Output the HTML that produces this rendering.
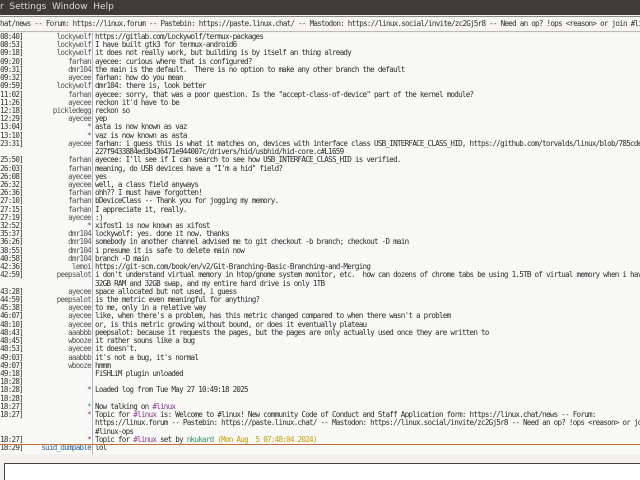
<!DOCTYPE html>
<html><head><meta charset="utf-8"><style>
*{margin:0;padding:0;box-sizing:border-box}
body{width:640px;height:480px;overflow:hidden;background:#f2f1f0;font-family:"DejaVu Sans Mono","Liberation Mono",monospace;position:relative}
#menu{position:absolute;left:0;top:0;width:640px;height:15px;background:#3c3b37;color:#dfdbd2;font:9px "DejaVu Sans","Liberation Sans",sans-serif;line-height:15px;white-space:pre}
#topic{position:absolute;left:0;top:16px;width:640px;height:16px;background:#f6f5f4;border-top:1px solid #8a8986;border-bottom:1px solid #bcbab7;font-size:7.6px;letter-spacing:-0.75px;line-height:14px;color:#333;white-space:pre;overflow:hidden}
#chat{position:absolute;left:0;top:33px;width:640px;height:421px;background:#f8f8f6;overflow:hidden}
#sep{position:absolute;left:92px;top:0;width:1px;height:421px;background:#b0b4c4}
.r{position:relative;height:8.22px;font-size:7.6px;letter-spacing:-0.75px;line-height:8.22px;white-space:pre;color:#2e2e2e}
.t{position:absolute;right:617px;top:0;color:#333}
.n{position:absolute;right:549px;top:0;color:#555}
.m{position:absolute;left:95px;top:0}
.p{color:#8b3c8b}.g{color:#3a9a6a}.y{color:#c4a000}.b{color:#3465a4}
#red{position:absolute;left:0;top:411px;width:640px;height:1px;background:#c07040}
#input{position:absolute;left:4px;top:463px;width:640px;height:17px;background:#fff;border:1px solid #444;border-right:none;border-bottom:none}
</style></head><body>
<div id="menu">r  Settings  Window  Help</div>
<div id="topic">hat/news -- Forum: https://linux.forum -- Pastebin: https://paste.linux.chat/ -- Mastodon: https://linux.social/invite/zc2Gj5r8 -- Need an op? !ops &lt;reason&gt; or join #linux-ops</div>
<div id="chat"><div id="sep"></div>
<div class="r"><span class="t">08:40]</span><span class="n">lockywolf</span><span class="m">https://gitlab.com/Lockywolf/termux-packages</span></div>
<div class="r"><span class="t">08:53]</span><span class="n">lockywolf</span><span class="m">I have built gtk3 for termux-android6</span></div>
<div class="r"><span class="t">09:18]</span><span class="n">lockywolf</span><span class="m">it does not really work, but building is by itself an thing already</span></div>
<div class="r"><span class="t">09:20]</span><span class="n">farhan</span><span class="m">ayecee: curious where that is configured?</span></div>
<div class="r"><span class="t">09:31]</span><span class="n">dmr104</span><span class="m">the main is the default.  There is no option to make any other branch the default</span></div>
<div class="r"><span class="t">09:32]</span><span class="n">ayecee</span><span class="m">farhan: how do you mean</span></div>
<div class="r"><span class="t">09:59]</span><span class="n">lockywolf</span><span class="m">dmr104: there is, look better</span></div>
<div class="r"><span class="t">11:02]</span><span class="n">farhan</span><span class="m">ayecee: sorry, that was a poor question. Is the "accept-class-of-device" part of the kernel module?</span></div>
<div class="r"><span class="t">11:26]</span><span class="n">ayecee</span><span class="m">reckon it'd have to be</span></div>
<div class="r"><span class="t">12:18]</span><span class="n">pickledegg</span><span class="m">reckon so</span></div>
<div class="r"><span class="t">12:29]</span><span class="n">ayecee</span><span class="m">yep</span></div>
<div class="r"><span class="t">13:04]</span><span class="n">*</span><span class="m">asta is now known as vaz</span></div>
<div class="r"><span class="t">13:10]</span><span class="n">*</span><span class="m">vaz is now known as asta</span></div>
<div class="r"><span class="t">23:31]</span><span class="n">ayecee</span><span class="m">farhan: i guess this is what it matches on, devices with interface class USB_INTERFACE_CLASS_HID, https://github.com/torvalds/linux/blob/785cdec</span></div>
<div class="r"><span class="m">227f9433884ed3b436471e944007c/drivers/hid/usbhid/hid-core.c#L1659</span></div>
<div class="r"><span class="t">25:50]</span><span class="n">farhan</span><span class="m">ayecee: I'll see if I can search to see how USB_INTERFACE_CLASS_HID is verified.</span></div>
<div class="r"><span class="t">26:03]</span><span class="n">farhan</span><span class="m">meaning, do USB devices have a "I'm a hid" field?</span></div>
<div class="r"><span class="t">26:08]</span><span class="n">ayecee</span><span class="m">yes</span></div>
<div class="r"><span class="t">26:32]</span><span class="n">ayecee</span><span class="m">well, a class field anyways</span></div>
<div class="r"><span class="t">26:36]</span><span class="n">farhan</span><span class="m">ohh?? I must have forgotten!</span></div>
<div class="r"><span class="t">27:10]</span><span class="n">farhan</span><span class="m">bDeviceClass -- Thank you for jogging my memory.</span></div>
<div class="r"><span class="t">27:15]</span><span class="n">farhan</span><span class="m">I appreciate it, really.</span></div>
<div class="r"><span class="t">27:19]</span><span class="n">ayecee</span><span class="m">:)</span></div>
<div class="r"><span class="t">32:52]</span><span class="n">*</span><span class="m">xifost1 is now known as xifost</span></div>
<div class="r"><span class="t">35:37]</span><span class="n">dmr104</span><span class="m">lockywolf: yes. done it now. thanks</span></div>
<div class="r"><span class="t">36:26]</span><span class="n">dmr104</span><span class="m">somebody in another channel advised me to git checkout -b branch; checkout -D main</span></div>
<div class="r"><span class="t">38:55]</span><span class="n">dmr104</span><span class="m">i presume it is safe to delete main now</span></div>
<div class="r"><span class="t">40:58]</span><span class="n">dmr104</span><span class="m">branch -D main</span></div>
<div class="r"><span class="t">42:36]</span><span class="n">lemoi</span><span class="m">https://git-scm.com/book/en/v2/Git-Branching-Basic-Branching-and-Merging</span></div>
<div class="r"><span class="t">42:59]</span><span class="n">peepsalot</span><span class="m">i don't understand virtual memory in htop/gnome system monitor, etc.  how can dozens of chrome tabs be using 1.5TB of virtual memory when i have</span></div>
<div class="r"><span class="m">32GB RAM and 32GB swap, and my entire hard drive is only 1TB</span></div>
<div class="r"><span class="t">43:28]</span><span class="n">ayecee</span><span class="m">space allocated but not used, i guess</span></div>
<div class="r"><span class="t">44:59]</span><span class="n">peepsalot</span><span class="m">is the metric even meaningful for anything?</span></div>
<div class="r"><span class="t">45:38]</span><span class="n">ayecee</span><span class="m">to me, only in a relative way</span></div>
<div class="r"><span class="t">46:07]</span><span class="n">ayecee</span><span class="m">like, when there's a problem, has this metric changed compared to when there wasn't a problem</span></div>
<div class="r"><span class="t">48:10]</span><span class="n">ayecee</span><span class="m">or, is this metric growing without bound, or does it eventually plateau</span></div>
<div class="r"><span class="t">48:43]</span><span class="n">aaabbb</span><span class="m">peepsalot: because it requests the pages, but the pages are only actually used once they are written to</span></div>
<div class="r"><span class="t">48:45]</span><span class="n">wbooze</span><span class="m">it rather souns like a bug</span></div>
<div class="r"><span class="t">48:53]</span><span class="n">ayecee</span><span class="m">it doesn't.</span></div>
<div class="r"><span class="t">49:03]</span><span class="n">aaabbb</span><span class="m">it's not a bug, it's normal</span></div>
<div class="r"><span class="t">49:07]</span><span class="n">wbooze</span><span class="m">hmmm</span></div>
<div class="r"><span class="t">49:18]</span><span class="m">FiSHLiM plugin unloaded</span></div>
<div class="r"><span class="t">18:28]</span></div>
<div class="r"><span class="t">18:28]</span><span class="n">*</span><span class="m">Loaded log from Tue May 27 10:49:18 2025</span></div>
<div class="r"><span class="t">18:28]</span></div>
<div class="r"><span class="t">18:27]</span><span class="n g">*</span><span class="m">Now talking on <span class="p">#linux</span></span></div>
<div class="r"><span class="t">18:27]</span><span class="n p">*</span><span class="m">Topic for <span class="p">#linux</span> is: Welcome to #linux! New community Code of Conduct and Staff Application form: https://linux.chat/news -- Forum:</span></div>
<div class="r"><span class="m">https://linux.forum -- Pastebin: https://paste.linux.chat/ -- Mastodon: https://linux.social/invite/zc2Gj5r8 -- Need an op? !ops &lt;reason&gt; or join</span></div>
<div class="r"><span class="m">#linux-ops</span></div>
<div class="r"><span class="t">18:27]</span><span class="n p">*</span><span class="m">Topic for <span class="p">#linux</span> set by <span class="g">nkukard</span> <span class="y">(Mon Aug  5 07:48:04 2024)</span></span></div>
<div class="r"><span class="t">18:29]</span><span class="n b">suid_dumpable</span><span class="m">lol</span></div>
<div id="red"></div>
</div>
<div id="input"></div>
</body></html>
